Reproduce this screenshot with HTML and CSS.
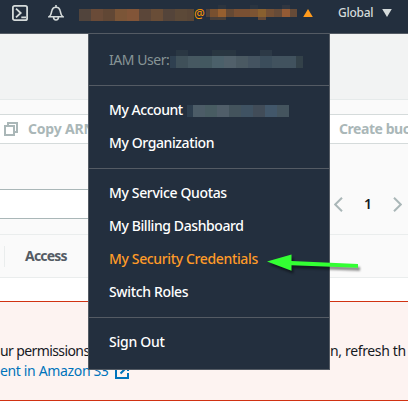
FILE: index.html
```html
<!DOCTYPE html>
<html lang="en">
<head>
<meta charset="utf-8">
<title>Amazon S3</title>
<link rel="stylesheet" href="styles.css">
</head>
<body>
<header class="topbar">
  <svg class="icon shell" width="16" height="16" viewBox="0 0 16 16"><rect x=".9" y=".9" width="14.2" height="14.2" rx="1.7"/><path d="M4 3.6 8.7 8 4 12.3M9.3 12.3H14"/></svg>
  <svg class="icon bell" width="16" height="16" viewBox="0 0 16 16"><path d="M8 0v2M1.2 11.7C3.8 9.800 3.100 7.500 4 5.200 5.200 1.300 10.800 1.300 12 5.200c.9 2.300.2 4.600 2.800 6.500zM5.500 12c.2 4 4.800 4 5 0"/></svg>
  <span class="mosaic user-name"></span>
  <span class="at">@</span>
  <span class="mosaic account-name"></span>
  <svg class="up" width="10" height="8" viewBox="0 0 10 8"><path d="M5 0 9.800 8H.2z"/></svg>
  <span class="region">Global</span>
  <svg class="down" width="10" height="8" viewBox="0 0 10 8"><path d="M.2 0h9.600L5 8z"/></svg>
</header>
<main>
  <div class="crumbs"></div>
  <section class="panel">
    <div class="actions">
      <svg class="copy" width="14" height="14" viewBox="0 0 14 14"><path d="M1 4h9v9H1zM4 4V1h9v9h-3"/></svg>
      <span class="copy-label">Copy ARN</span>
      <span class="create-label">Create buc</span>
    </div>
    <div class="filter">
      <div class="search"></div>
      <svg class="arrow" width="9" height="15" viewBox="0 0 9 15"><path d="M8 .7 1.200 7.500 8 14.300"/></svg>
      <span class="page">1</span>
      <svg class="arrow" width="9" height="15" viewBox="0 0 9 15"><path d="M1 .7 7.800 7.500 1 14.300"/></svg>
    </div>
    <div class="columns"><span class="column">Access</span></div>
  </section>
  <div class="alert">
    <div class="line"><span class="start">ur permissions</span><span class="end">n, refresh th</span></div>
    <div class="line link"><span class="manage">ent in Amazon S3</span><svg class="external" width="14" height="14" viewBox="0 0 14 14"><path d="M6 1H1v12h12V8M8 1h5v5M13 1 5.500 8.500"/></svg></div>
  </div>
</main>
<nav class="menu">
  <div class="group user"><span class="item iam">IAM User:</span><span class="mosaic iam-name"></span></div>
  <div class="group">
    <div class="row"><span class="item account">My Account</span><span class="mosaic account-id"></span></div>
    <div class="row"><span class="item organization">My Organization</span></div>
  </div>
  <div class="group">
    <div class="row"><span class="item quotas">My Service Quotas</span></div>
    <div class="row"><span class="item billing">My Billing Dashboard</span></div>
    <div class="row"><span class="item security">My Security Credentials</span></div>
    <div class="row"><span class="item roles">Switch Roles</span></div>
  </div>
  <div class="group"><div class="row"><span class="item out">Sign Out</span></div></div>
</nav>
<svg class="pointer" width="104" height="28" viewBox="0 0 104 28"><path d="M4 11.500 28.500 4.500v6.400L95 14v3.800l-66.500-2.600v5.500z"/></svg>
</body>
</html>
```
FILE: styles.css
```css
* { box-sizing: border-box; }
body {
  margin: 0; width: 408px; height: 406px; overflow: hidden; position: relative;
  background: #fff; color: #16191f; font: 14px/20px "Noto Sans", "Open Sans", sans-serif;
}
svg { display: block; flex: none; }
span { white-space: nowrap; flex: none; }
.topbar {
  display: flex; align-items: flex-start; height: 34px; padding: 5px 0 0 12px;
  background: #232f3e; border-bottom: 1px solid #545b64; color: #d5dbdb;
}
.icon { fill: none; stroke: #d5dbdb; stroke-width: 1.8; }
.shell { margin-right: 20px; }
.bell { margin-right: 15px; stroke-width: 1.6; }
.mosaic { display: block; background-repeat: no-repeat; }
.user-name {
  width: 115px; height: 12px; margin-top: 4px;
  background: linear-gradient(90deg, #51443c 12px, #6a4b38 0 24px, #614735 0 36px, #7b5537 0 48px, #825538 0 60px, #5b4639 0 72px, #694d37 0 84px, #54443a 0 96px, #5c4938 0 108px, #594637 0);
}
.at { width: 12px; color: #f90; font-size: 12px; line-height: 17px; letter-spacing: -1px; }
.account-name {
  width: 91px; height: 15px;
  background:
    linear-gradient(#2c343e, #2c343e) 12px 0 / 8px 4px,
    linear-gradient(#2a3440, #2a3440) 44px 0 / 8px 4px,
    linear-gradient(#303640, #303640) 76px 0 / 8px 4px,
    linear-gradient(90deg, #4c403b 4px, #78502f 0 12px, #965f2f 0 20px, #654934 0 28px, #795033 0 44px, #7c5433 0 52px, #89602f 0 60px, #745035 0 68px, #664b38 0 76px, #945b35 0 84px, #664b38 0) 0 4px / 91px 8px,
    linear-gradient(90deg, transparent 4px, #493f39 0 12px, #4b4038 0 20px, transparent 0 52px, #654a38 0 60px, transparent 0) 0 12px / 91px 3px;
  background-repeat: no-repeat;
}
.up { margin: 4px 0 0 6px; fill: #ff9b1c; }
.region { width: 36px; margin: -2px 8px 0 25px; font-size: 12px; font-weight: 500; letter-spacing: -.25px; }
.down { margin-top: 4px; fill: #d5dbdb; }
.crumbs { height: 66px; background: #f2f3f3; border-bottom: 1px solid #e6eaea; }
.panel { padding-top: 14px; background: #fafafa; }
.actions {
  display: flex; align-items: center; height: 30px; padding-left: 4px;
  border: solid #d5dbdb; border-width: 1px 0; background: #fff; color: #aab7b8; font-weight: 700;
}
.copy { fill: none; stroke: #aab7b8; stroke-width: 2; }
.copy-label { width: 321px; padding-left: 10px; letter-spacing: -.2px; }
.create-label { letter-spacing: -.45px; }
.filter { display: flex; align-items: center; height: 90px; padding-top: 30px; }
.search { width: 300px; height: 30px; margin: 15px 34px 0 0; align-self: flex-start; border: solid #aab7b8; border-width: 1px 0; background: #fff; }
.arrow { fill: none; stroke: #aab7b8; stroke-width: 2; }
.page { width: 50px; text-align: center; font-weight: 600; }
.columns { display: flex; align-items: center; height: 44px; border: solid #eaeded; border-width: 1px 0; }
.column { height: 21px; padding-left: 20px; margin-left: 4px; border-left: 1px solid #eaeded; color: #545b64; font-weight: 700; letter-spacing: -.8px; }
.alert { height: 100px; margin-top: 23px; padding-top: 39px; border: solid #d13212; border-width: 1px 0; background: #fdf3f1; }
.line { display: flex; height: 20px; }
.start { width: 330px; letter-spacing: -.6px; }
.end { letter-spacing: -.35px; }
.link { color: #0073bb; }
.manage { width: 115px; letter-spacing: -.35px; }
.external { margin-top: 4px; fill: none; stroke: #0073bb; stroke-width: 2; }
.menu { position: absolute; left: 88px; top: 33px; width: 242px; height: 337px; border: 1px solid #545b64; background: #232f3e; color: #fff; font-weight: 500; }
.group { padding: 8px 20px; border-bottom: 1px solid #545b64; }
.group:last-child { border: 0; }
.row { display: flex; align-items: center; height: 33px; }
.row .item { margin-top: -2px; }
.user { display: flex; height: 52px; padding-top: 16px; color: #879596; font-weight: 400; }
.iam { width: 61px; }
.iam-name {
  width: 133px; height: 18px;
  background:
    linear-gradient(90deg, transparent 6px, #2a3743 0 18px, transparent 0 42px, #293641 0 66px, transparent 0 90px, #2c3946 0 102px, transparent 0) 0 0 / 133px 6px,
    linear-gradient(90deg, #2f4050 6px, #3f5059 0 18px, #465861 0 30px, #435860 0 42px, #4b606a 0 54px, #51606a 0 66px, #4a5962 0 78px, #445360 0 90px, #3b4d5b 0 102px, #41525e 0 126px, #334149 0) 0 6px / 133px 12px;
  background-repeat: no-repeat;
}
.account { width: 78px; }
.account-id {
  width: 102px; height: 12px;
  background: linear-gradient(90deg, #2d3e4e 6px, #4c5c67 0 18px, #485c62 0 30px, #505e69 0 42px, #43535c 0 54px, #3f5262 0 66px, #414c58 0 78px, #42576a 0 90px, #44545e 0);
}
.item { letter-spacing: -.45px; }
.organization, .billing { letter-spacing: -.4px; }
.quotas, .roles { letter-spacing: -.35px; }
.security { color: #ff9b28; letter-spacing: -.36px; }
.out { letter-spacing: -.25px; }
.pointer { position: absolute; left: 263px; top: 250px; fill: #3f3; filter: drop-shadow(2px 3px 1px rgb(0 0 0 / .45)); }
```
